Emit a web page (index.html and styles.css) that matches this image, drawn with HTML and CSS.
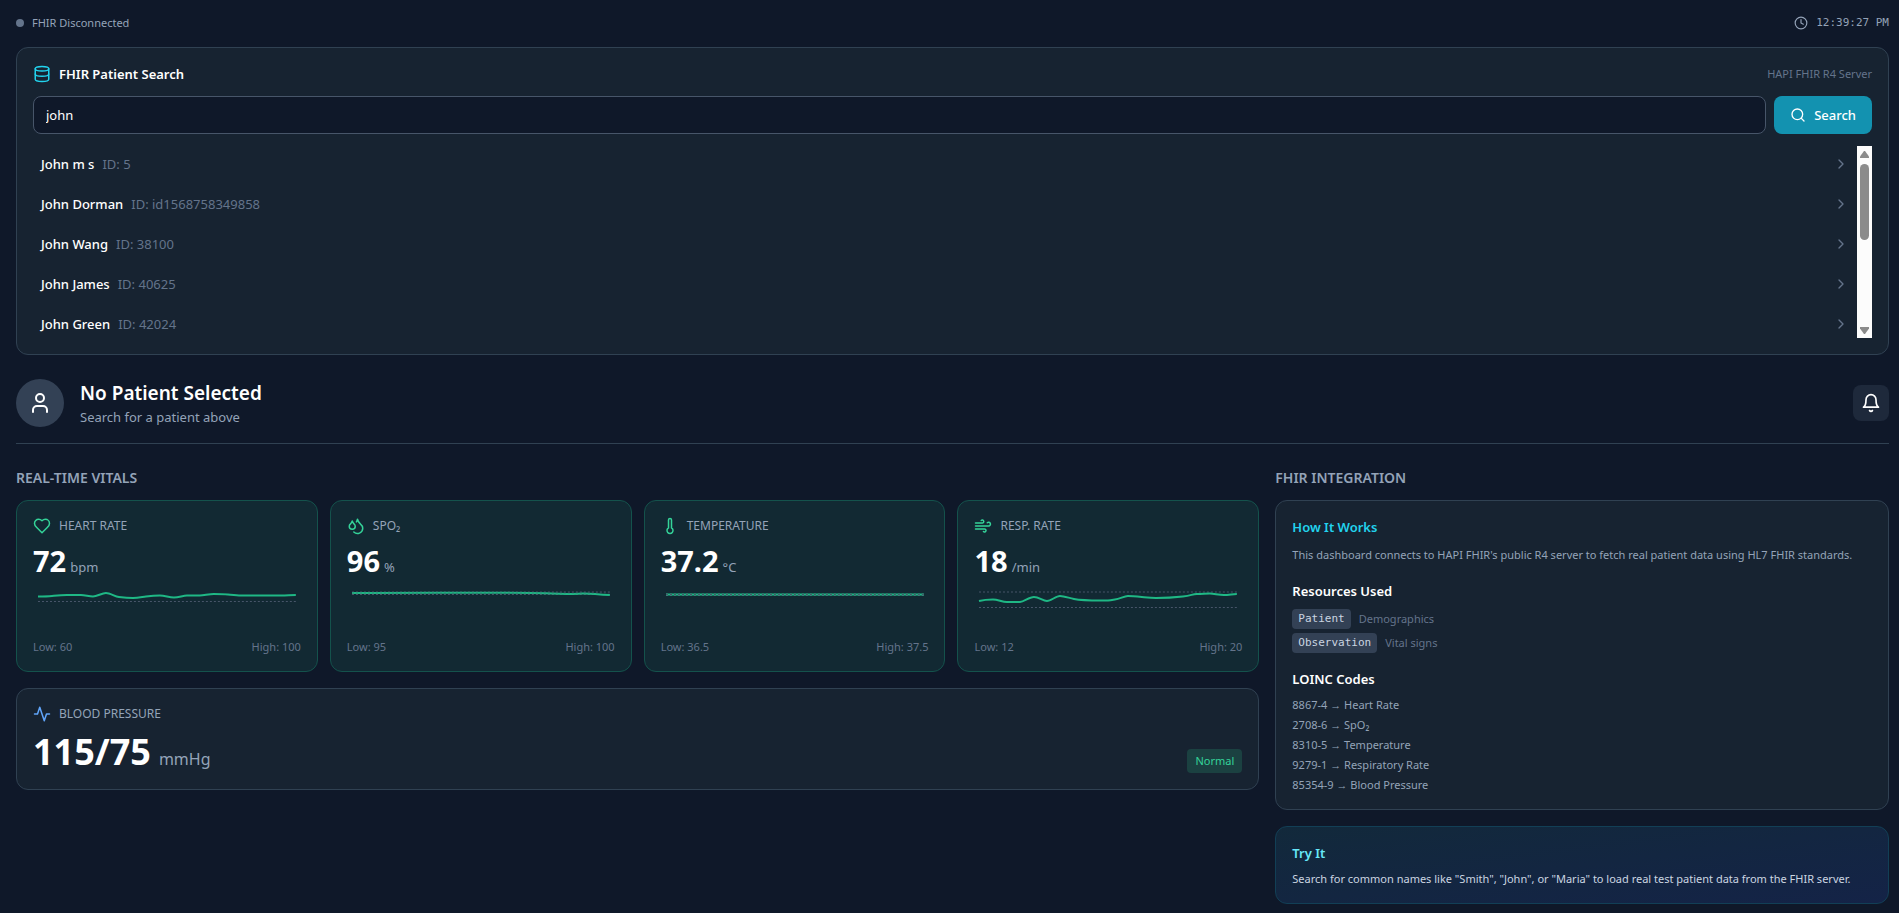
FILE: index.html
```
<!DOCTYPE html>
<html lang="en">
<head>
    <meta charset="utf-8">
    <meta name="viewport" content="width=device-width, initial-scale=1.0">
    <title>FHIR Patient Dashboard</title>
    <link rel="stylesheet" href="styles.css">
</head>
<body>
    <div class="topbar">
        <div class="status"><span class="dot"></span>FHIR Disconnected</div>
        <div class="clock">
            <svg class="icon icon-sm" viewBox="0 0 24 24"><circle cx="12" cy="12" r="10"/><path d="M12 6v6l4 2"/></svg>
            <time>12:39:27 PM</time>
        </div>
    </div>

    <section class="card search">
        <div class="search-head">
            <svg class="icon cyan" viewBox="0 0 24 24"><ellipse cx="12" cy="5" rx="9" ry="3"/><path d="M3 5v14a9 3 0 0 0 18 0V5"/><path d="M3 12a9 3 0 0 0 18 0"/></svg>
            <h2><label for="query">FHIR Patient Search</label></h2>
            <span class="server">HAPI FHIR R4 Server</span>
        </div>
        <form class="search-form">
            <input type="text" id="query" value="john">
            <button type="button" class="btn">
                <svg class="icon" viewBox="0 0 24 24"><circle cx="11" cy="11" r="8"/><path d="m21 21-4.3-4.3"/></svg>
                Search
            </button>
        </form>
        <div class="results">
            <div class="results-list">
                <button type="button" class="result"><span class="name">John m s</span><span class="id">ID: 5</span><svg class="icon chevron" viewBox="0 0 24 24"><path d="m9 18 6-6-6-6"/></svg></button>
                <button type="button" class="result"><span class="name">John Dorman</span><span class="id">ID: id1568758349858</span><svg class="icon chevron" viewBox="0 0 24 24"><path d="m9 18 6-6-6-6"/></svg></button>
                <button type="button" class="result"><span class="name">John Wang</span><span class="id">ID: 38100</span><svg class="icon chevron" viewBox="0 0 24 24"><path d="m9 18 6-6-6-6"/></svg></button>
                <button type="button" class="result"><span class="name">John James</span><span class="id">ID: 40625</span><svg class="icon chevron" viewBox="0 0 24 24"><path d="m9 18 6-6-6-6"/></svg></button>
                <button type="button" class="result"><span class="name">John Green</span><span class="id">ID: 42024</span><svg class="icon chevron" viewBox="0 0 24 24"><path d="m9 18 6-6-6-6"/></svg></button>
            </div>
            <div class="scrollbar" aria-hidden="true">
                <svg class="arrow" viewBox="0 0 9 7"><path d="M4 0h1l4 5.500V7H0V5.500z"/></svg>
                <div class="track"><div class="thumb"></div></div>
                <svg class="arrow" viewBox="0 0 9 7"><path d="M4 7h1l4-5.500V0H0v1.500z"/></svg>
            </div>
        </div>
    </section>

    <header class="patient">
        <div class="avatar">
            <svg class="icon icon-lg" viewBox="0 0 24 24"><circle cx="12" cy="7" r="4"/><path d="M19 21v-2a4 4 0 0 0-4-4H9a4 4 0 0 0-4 4v2"/></svg>
        </div>
        <div class="who">
            <h1>No Patient Selected</h1>
            <p>Search for a patient above</p>
        </div>
        <button type="button" class="bell" aria-label="Alerts">
            <svg class="icon icon-md" viewBox="0 0 24 24"><path d="M6 8a6 6 0 0 1 12 0c0 7 3 9 3 9H3s3-2 3-9"/><path d="M10.3 21a1.94 1.94 0 0 0 3.4 0"/></svg>
        </button>
    </header>

    <main>
        <section class="left">
            <h2 class="section-title">Real-Time Vitals</h2>
            <div class="vitals">
                <article class="card vital">
                    <div class="label">
                        <svg class="icon green" viewBox="0 0 24 24"><path d="M19 14c1.49-1.46 3-3.21 3-5.5A5.5 5.5 0 0 0 16.5 3c-1.76 0-3 .5-4.5 2-1.5-1.5-2.74-2-4.5-2A5.5 5.5 0 0 0 2 8.5c0 2.3 1.5 4.05 3 5.5l7 7Z"/></svg>
                        Heart Rate
                    </div>
                    <div class="value"><strong>72</strong><span>bpm</span></div>
                    <svg class="chart" viewBox="0 0 268 48" preserveAspectRatio="none">
                        <path class="limit" d="M5 14.5H263"/>
                        <path class="line" d="M5 9.500C9 9.500 14 9.500 19 9S28 8 34 8 44 8 48 8S56 9.500 60 9.500S69 6 73 6S82 9.500 86 10S95 11 100 11S109 10 113 9.500S122 8.500 127 8.500S136 10.500 141 10.500S150 8.500 154 8.500S163 8.500 167 8.500S176 7 181 7S190 7 195 7.500S204 8.500 208 8.500S245 8.500 249 8.500S259 8 263 8"/>
                    </svg>
                    <div class="range"><span>Low: 60</span><span>High: 100</span></div>
                </article>
                <article class="card vital">
                    <div class="label">
                        <svg class="icon green" viewBox="0 0 24 24"><path d="M7 16.3c2.2 0 4-1.83 4-4.05 0-1.16-.57-2.26-1.71-3.19S7.29 6.75 7 5.3c-.29 1.45-1.14 2.84-2.29 3.76S3 11.1 3 12.25c0 2.22 1.8 4.05 4 4.05z"/><path d="M12.56 6.6A10.97 10.97 0 0 0 14 3.02c.5 2.5 2 4.9 4 6.5s3 3.5 3 5.5a6.98 6.98 0 0 1-11.91 4.97"/></svg>
                        SpO₂
                    </div>
                    <div class="value"><strong>96</strong><span>%</span></div>
                    <svg class="chart" viewBox="0 0 268 48" preserveAspectRatio="none">
                        <path class="limit" d="M5 5H263M5 7.500H263"/>
                        <path class="line" d="M5 6C60 5.500 190 5.500 205 6.500S225 7 235 6.500S250 8 263 8"/>
                        <path class="limit faint" d="M5 6H263"/>
                    </svg>
                    <div class="range"><span>Low: 95</span><span>High: 100</span></div>
                </article>
                <article class="card vital">
                    <div class="label">
                        <svg class="icon green" viewBox="0 0 24 24"><path d="M14 4v10.54a4 4 0 1 1-4 0V4a2 2 0 0 1 4 0Z"/></svg>
                        Temperature
                    </div>
                    <div class="value"><strong>37.2</strong><span>°C</span></div>
                    <svg class="chart" viewBox="0 0 268 48" preserveAspectRatio="none">
                        <path class="limit" d="M5 7H263M5 8.500H263"/>
                        <path class="line" d="M5 7.500H263"/>
                        <path class="limit" d="M5 7.500H263"/>
                    </svg>
                    <div class="range"><span>Low: 36.5</span><span>High: 37.5</span></div>
                </article>
                <article class="card vital">
                    <div class="label">
                        <svg class="icon green" viewBox="0 0 24 24"><path d="M17.7 7.7a2.5 2.5 0 1 1 1.8 4.3H2"/><path d="M9.6 4.6A2 2 0 1 1 11 8H2"/><path d="M12.6 19.4A2 2 0 1 0 14 16H2"/></svg>
                        Resp. Rate
                    </div>
                    <div class="value"><strong>18</strong><span>/min</span></div>
                    <svg class="chart" viewBox="0 0 268 48" preserveAspectRatio="none">
                        <path class="limit" d="M5 5H263M5 20.500H263"/>
                        <path class="line" d="M5 14C9 13 14 12.500 19 12.500S28 15 33 15S42 15 46 15S55 10 60 10S69 14 73 14S82 9 86 9S95 11 100 12S114 13.500 127 13.500S136 13 141 12.500S150 9 154 9S163 9.500 168 10S177 11 182 11S200 10.500 209 9.500S218 7 223 7S232 6.500 236 6.500S245 8 250 8S259 7 263 7"/>
                    </svg>
                    <div class="range"><span>Low: 12</span><span>High: 20</span></div>
                </article>
            </div>
            <article class="card bp">
                <div class="label">
                    <svg class="icon blue" viewBox="0 0 24 24"><path d="M22 12h-4l-3 9L9 3l-3 9H2"/></svg>
                    Blood Pressure
                </div>
                <div class="bp-row">
                    <div class="bp-value"><strong>115/75</strong><span>mmHg</span></div>
                    <span class="badge">Normal</span>
                </div>
            </article>
        </section>

        <aside class="right">
            <h2 class="section-title">FHIR Integration</h2>
            <div class="card info">
                <h3 class="cyan">How It Works</h3>
                <p>This dashboard connects to HAPI FHIR's public R4 server to fetch real patient data using HL7 FHIR standards.</p>
                <h3>Resources Used</h3>
                <ul class="resources">
                    <li><code>Patient</code>Demographics</li>
                    <li><code>Observation</code>Vital signs</li>
                </ul>
                <h3>LOINC Codes</h3>
                <ul class="codes">
                    <li>8867-4 → Heart Rate</li>
                    <li>2708-6 → SpO₂</li>
                    <li>8310-5 → Temperature</li>
                    <li>9279-1 → Respiratory Rate</li>
                    <li>85354-9 → Blood Pressure</li>
                </ul>
            </div>
            <div class="card tryit">
                <h3>Try It</h3>
                <p>Search for common names like "Smith", "John", or "Maria" to load real test patient data from the FHIR server.</p>
            </div>
        </aside>
    </main>
</body>
</html>
```
FILE: styles.css
```
* {
    box-sizing: border-box;
    margin: 0;
    padding: 0;
}
:root {
    --white: #ffffff;
    --text: #cbd5e1;
    --muted: #94a3b8;
    --dim: #64748b;
    --line: #304152;
    --cyan: #22d3ee;
    --green: #34d399;
}
body {
    min-height: 100vh;
    padding: 15px 10px 8px 16px;
    background: #0f1829;
    color: var(--white);
    font-family: "Noto Sans", "Open Sans", sans-serif;
    font-size: 13px;
    line-height: 20px;
}
button, input {
    font: inherit;
    color: inherit;
}
button {
    border: none;
    cursor: pointer;
}
ul {
    list-style: none;
}
h2, h3 {
    font-size: 13px;
    font-weight: 600;
}

.icon {
    width: 18px;
    height: 18px;
    flex-shrink: 0;
    fill: none;
    stroke: currentColor;
    stroke-width: 2;
    stroke-linecap: round;
    stroke-linejoin: round;
}
.icon-sm { width: 14px; height: 14px; }
.icon-md { width: 20px; height: 20px; }
.icon-lg { width: 24px; height: 24px; }
.cyan { color: var(--cyan); }
.green { color: var(--green); }
.blue { color: #60a5fa; }

.card {
    padding: 16px;
    border: 1px solid var(--line);
    border-radius: 12px;
    background: #172331;
}

.topbar {
    display: flex;
    justify-content: space-between;
    align-items: center;
    margin-bottom: 16px;
    color: var(--muted);
    font-size: 11px;
    line-height: 16px;
}
.status, .clock {
    display: flex;
    align-items: center;
    gap: 8px;
}
.dot {
    width: 8px;
    height: 8px;
    border-radius: 50%;
    background: var(--dim);
}
.clock time, code {
    font-family: "DejaVu Sans Mono", monospace;
    font-size: 11px;
}

.search-head {
    display: flex;
    align-items: center;
    gap: 8px;
    margin-bottom: 12px;
}
.server {
    margin-left: auto;
    color: var(--dim);
    font-size: 11px;
}
.search-form {
    display: flex;
    gap: 8px;
    margin-bottom: 12px;
}
.search-form input {
    flex: 1;
    min-width: 0;
    height: 38px;
    padding: 0 12px;
    border: 1px solid #475569;
    border-radius: 8px;
    outline: none;
    background: #0f1829;
}
.btn {
    display: flex;
    align-items: center;
    gap: 8px;
    padding: 0 16px;
    border-radius: 8px;
    background: #1392b0;
    font-weight: 500;
}
.btn .icon {
    width: 16px;
    height: 16px;
}
.results {
    display: flex;
    height: 192px;
}
.results-list {
    display: flex;
    flex: 1;
    flex-direction: column;
    gap: 4px;
    overflow: hidden;
}
.result {
    display: flex;
    flex-shrink: 0;
    align-items: center;
    gap: 8px;
    height: 36px;
    padding: 0 8px;
    border-radius: 4px;
    background: none;
}
.result .name {
    font-weight: 500;
}
.result .id {
    color: var(--dim);
}
.chevron {
    width: 16px;
    height: 16px;
    margin-left: auto;
    color: var(--dim);
}
.scrollbar {
    display: flex;
    flex-direction: column;
    align-items: center;
    gap: 6px;
    width: 15px;
    padding: 5px 0 4px;
    background: #fcfcfc;
}
.arrow {
    width: 9px;
    height: 7px;
    fill: #8b8b8b;
}
.track {
    flex: 1;
}
.thumb {
    width: 9px;
    height: 48%;
    min-height: 76px;
    border-radius: 5px;
    background: #8b8b8b;
}

.patient {
    display: flex;
    align-items: center;
    gap: 16px;
    margin: 24px 0;
    padding-bottom: 16px;
    border-bottom: 1px solid var(--line);
}
.avatar {
    display: grid;
    place-items: center;
    width: 48px;
    height: 48px;
    border-radius: 50%;
    background: #334155;
}
.who h1 {
    font-size: 19px;
    font-weight: 600;
    line-height: 28px;
}
.who p {
    color: var(--muted);
}
.bell {
    display: grid;
    place-items: center;
    width: 36px;
    height: 36px;
    margin-left: auto;
    border-radius: 8px;
    background: #1e293b;
}

main {
    display: grid;
    grid-template-columns: repeat(3, minmax(0, 1fr));
    gap: 16px;
    align-items: start;
}
.left {
    grid-column: span 2;
}
.section-title {
    margin-bottom: 12px;
    color: var(--muted);
    font-size: 14px;
    text-transform: uppercase;
}
.vitals {
    display: grid;
    grid-template-columns: repeat(4, minmax(0, 1fr));
    gap: 12px;
    margin-bottom: 16px;
}
.vital {
    border-color: #14524c;
    background: #122933;
}
.label {
    display: flex;
    align-items: center;
    gap: 8px;
    margin-bottom: 8px;
    color: var(--muted);
    font-size: 12px;
    line-height: 18px;
    text-transform: uppercase;
}
.value {
    display: flex;
    align-items: baseline;
    gap: 4px;
    color: var(--muted);
}
.value strong {
    color: var(--white);
    font-size: 29px;
    font-weight: 700;
    line-height: 36px;
}
.chart {
    display: block;
    width: 100%;
    height: 48px;
    margin: 8px 0 4px;
    fill: none;
}
.chart .line {
    stroke: #1fb885;
    stroke-width: 2;
}
.chart .limit {
    stroke: #475569;
    stroke-dasharray: 2 2;
}
.chart .faint {
    stroke-opacity: 0.5;
}
.range {
    display: flex;
    justify-content: space-between;
    color: var(--dim);
    font-size: 11px;
    line-height: 16px;
}

.bp-row {
    display: flex;
    justify-content: space-between;
    align-items: flex-end;
}
.bp-value {
    display: flex;
    align-items: baseline;
    gap: 8px;
    color: var(--muted);
    font-size: 16px;
}
.bp-value strong {
    color: var(--white);
    font-size: 36px;
    font-weight: 700;
    line-height: 42px;
}
.badge {
    padding: 4px 8px;
    border-radius: 4px;
    background: #1b4141;
    color: var(--green);
    font-size: 11px;
    line-height: 16px;
}

.right {
    display: flex;
    flex-direction: column;
}
.info {
    margin-bottom: 16px;
}
.info h3, .tryit h3 {
    margin-bottom: 8px;
}
.info p {
    margin-bottom: 16px;
    color: var(--muted);
    font-size: 11px;
}
.resources, .codes {
    display: grid;
    gap: 4px;
    font-size: 11px;
}
.resources {
    margin-bottom: 16px;
    color: var(--dim);
}
.resources li {
    display: flex;
    gap: 8px;
}
.resources code {
    padding: 0 6px;
    border-radius: 4px;
    background: #334155;
    color: var(--text);
}
.codes {
    color: var(--muted);
    line-height: 16px;
}
.tryit {
    border-color: #123f56;
    background: linear-gradient(to bottom right, #12293b, #142347);
}
.tryit h3 {
    color: #67e8f9;
}
.tryit p {
    color: var(--text);
    font-size: 11px;
    line-height: 16px;
}

@media (max-width: 1000px) {
    main {
        grid-template-columns: minmax(0, 1fr);
    }
    .left {
        grid-column: auto;
    }
    .vitals {
        grid-template-columns: repeat(2, minmax(0, 1fr));
    }
}
```
